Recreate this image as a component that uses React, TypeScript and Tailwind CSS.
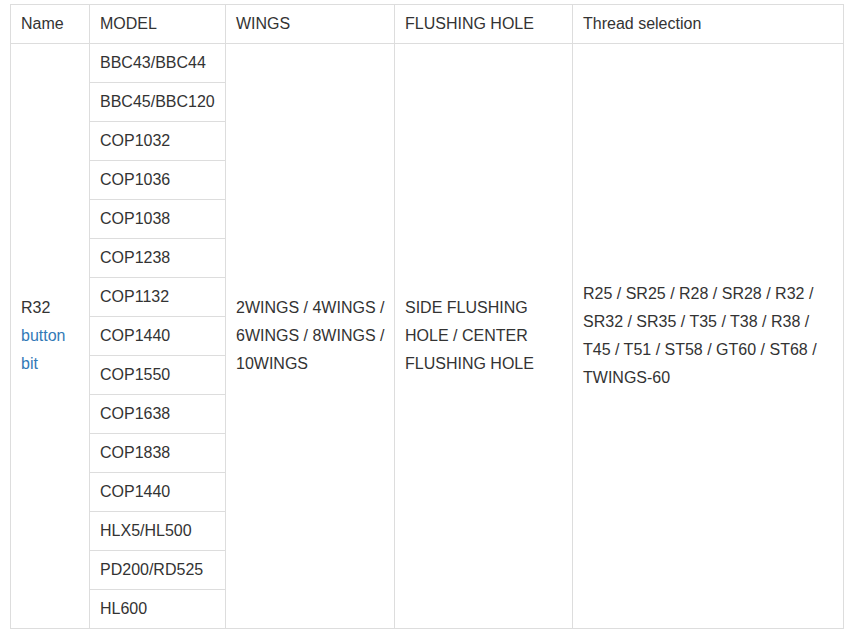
const models = [
  'BBC43/BBC44',
  'BBC45/BBC120',
  'COP1032',
  'COP1036',
  'COP1038',
  'COP1238',
  'COP1132',
  'COP1440',
  'COP1550',
  'COP1638',
  'COP1838',
  'COP1440',
  'HLX5/HL500',
  'PD200/RD525',
  'HL600',
];

const cell = 'border border-[#ddd] px-[10px] py-[5px] text-left align-middle font-normal';

export default function App() {
  return (
    <div className="bg-white min-h-screen pt-[4px] pl-[10px] text-[16px] leading-[28px] text-[#333]" style={{ fontFamily: '"Liberation Sans", Arial, sans-serif' }}>
      <table className="table-fixed border-collapse w-[833px]">
        <colgroup>
          <col className="w-[79px]" />
          <col className="w-[136px]" />
          <col className="w-[169px]" />
          <col className="w-[178px]" />
          <col className="w-[271px]" />
        </colgroup>
        <thead>
          <tr>
            <th className={cell}>Name</th>
            <th className={cell}>MODEL</th>
            <th className={cell}>WINGS</th>
            <th className={cell}>FLUSHING HOLE</th>
            <th className={cell}>Thread selection</th>
          </tr>
        </thead>
        <tbody>
          {models.map((m, i) => (
            <tr key={i}>
              {i === 0 && (
                <td rowSpan={models.length} className={cell}>
                  R32
                  <br />
                  <a href="#" className="text-[#337ab7]">
                    button
                    <br />
                    bit
                  </a>
                </td>
              )}
              <td className={cell}>{m}</td>
              {i === 0 && (
                <>
                  <td rowSpan={models.length} className={`${cell} whitespace-nowrap`}>
                    2WINGS / 4WINGS /
                    <br />
                    6WINGS / 8WINGS /
                    <br />
                    10WINGS
                  </td>
                  <td rowSpan={models.length} className={cell}>
                    SIDE FLUSHING HOLE / CENTER FLUSHING HOLE
                  </td>
                  <td rowSpan={models.length} className={cell}>
                    R25 / SR25 / R28 / SR28 / R32 / SR32 / SR35 / T35 / T38 / R38 / T45 / T51 / ST58 / GT60 / ST68 / TWINGS-60
                  </td>
                </>
              )}
            </tr>
          ))}
        </tbody>
      </table>
    </div>
  );
}
